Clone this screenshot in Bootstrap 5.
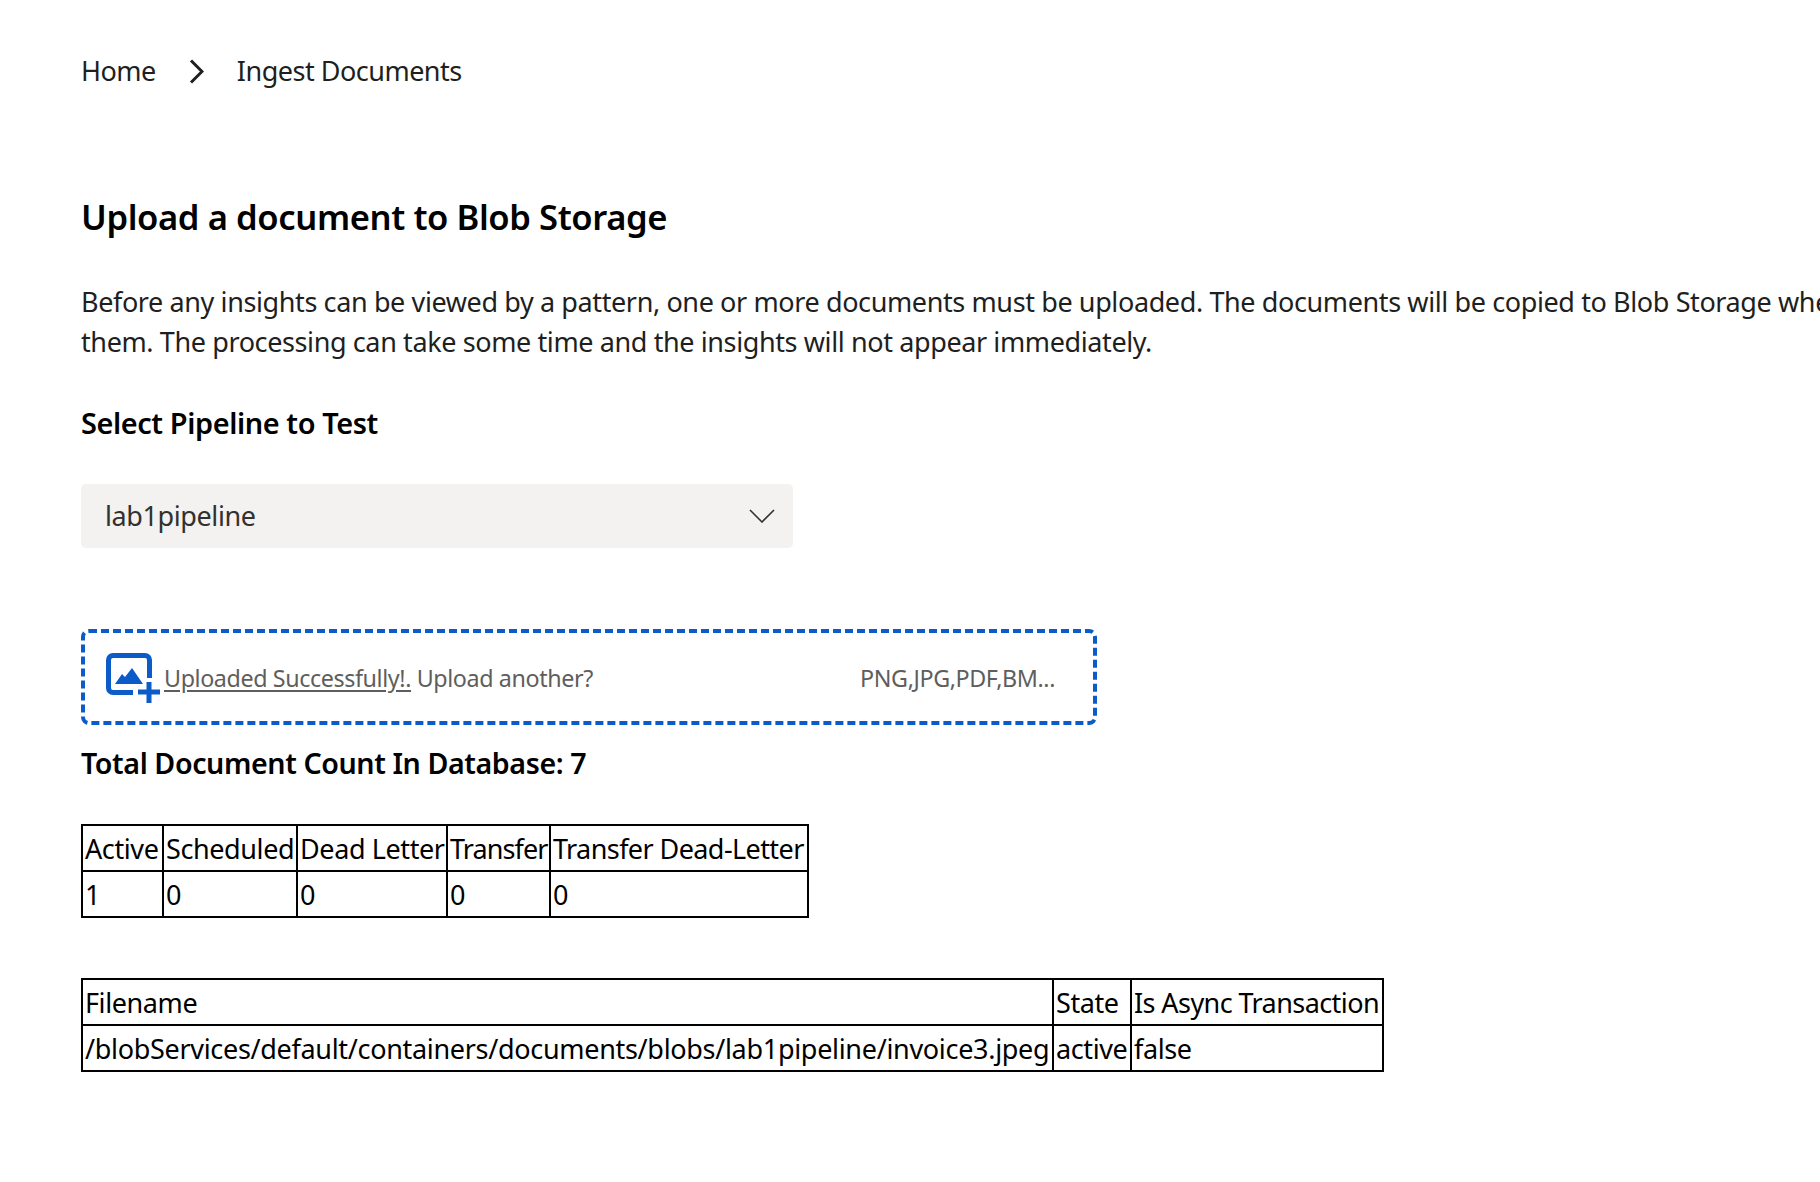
<!DOCTYPE html>
<html lang="en">
<head>
<meta charset="utf-8">
<title>Ingest Documents</title>
<meta name="viewport" content="width=device-width,initial-scale=1">
<link href="https://cdn.jsdelivr.net/npm/bootstrap@5.3.2/dist/css/bootstrap.min.css" rel="stylesheet">
<style>
  html, body   { overflow-x:hidden; }
  body         { font-family:"Noto Sans", "Open Sans", sans-serif; font-size:27px; color:#000; letter-spacing:-.4px; }
  .page-wrap   { padding:49px 0 0 81px; width:2000px; }
  .crumbs      { height:44px; gap:33px; line-height:44px; color:#201f1e; letter-spacing:-.5px; }
  .page-title  { font-size:34.6px; font-weight:600; line-height:46px; margin:101px 0 0; }
  .intro       { line-height:40px; margin:42px 0 0; color:#201f1e; white-space:nowrap; letter-spacing:-.39px; }
  .sub-title   { font-size:28.9px; font-weight:600; line-height:40px; margin:41px 0 0; }
  .pipeline    { width:712px; height:64px; margin-top:41px; padding:0 18px 0 24px; background:#f3f2f1; border-radius:5px; color:#323130; }
  .drop-zone   { width:1016px; height:96px; margin-top:81px; padding:2px 38px 0 21px; border:4px dashed #0b5cc9; border-radius:8px; color:#605e5c; font-size:23.3px; }
  .drop-zone u { text-underline-offset:3px; }
  .drop-types  { margin-left:auto; }
  .doc-count   { font-size:28.6px; font-weight:600; line-height:40px; margin:18px 0 0; }
  .grid-table  { table-layout:fixed; border-collapse:collapse; margin:0; }
  .grid-table td { border:2px solid #000; height:46px; padding:2px 2px 0; white-space:nowrap; overflow:hidden; line-height:42px; }
  .grid-table td.cell-tight { letter-spacing:-.9px; }
  .grid-table td.cell-snug  { letter-spacing:-.58px; }
  .grid-table td.cell-wide  { letter-spacing:-.31px; }
  .queue-table { width:726px; margin-top:41px; }
  .file-table  { width:1301px; margin-top:60px; }
  #q1 { width:81px; } #q2 { width:134px; } #q3 { width:150px; } #q4 { width:103px; } #q5 { width:258px; }
  #f1 { width:971px; } #f2 { width:78px; } #f3 { width:252px; }
</style>
</head>
<body>
<div class="page-wrap">

  <!-- breadcrumb -->
  <div class="crumbs d-flex align-items-center">
    <span>Home</span>
    <svg width="15" height="25" viewBox="0 0 15 25" fill="none" stroke="#201f1e" stroke-width="3"><path d="M2 1.500 13 12.500 2 23.500"/></svg>
    <span>Ingest Documents</span>
  </div>

  <h1 class="page-title">Upload a document to Blob Storage</h1>
  <p class="intro">Before any insights can be viewed by a pattern, one or more documents must be uploaded. The documents will be copied to Blob Storage when<br>them. The processing can take some time and the insights will not appear immediately.</p>

  <h2 class="sub-title">Select Pipeline to Test</h2>
  <div class="pipeline d-flex align-items-center justify-content-between">
    <span>lab1pipeline</span>
    <svg width="26" height="14" viewBox="0 0 26 14" fill="none" stroke="#323130" stroke-width="1.6"><path d="M1 1 13 13 25 1"/></svg>
  </div>

  <!-- upload box -->
  <div class="drop-zone d-flex align-items-center">
    <svg class="flex-shrink-0 me-1" width="54" height="52" viewBox="0 0 54 52">
      <path d="M43.5 26V8A4.5 4.5 0 0 0 39 3.500H7A4.500 4.500 0 0 0 2.500 8V36A4.500 4.500 0 0 0 7 40.500H27" fill="none" stroke="#0b5cc9" stroke-width="5"/>
      <path d="M9 32 16 22 19 25 26 16 37 32Z" fill="#0b5cc9"/>
      <path d="M43 30V51M32 40H54" fill="none" stroke="#0b5cc9" stroke-width="5"/>
    </svg>
    <span><u>Uploaded Successfully!.</u> Upload another?</span>
    <span class="drop-types">PNG,JPG,PDF,BM...</span>
  </div>

  <div class="doc-count">Total Document Count In Database: 7</div>

  <table class="grid-table queue-table">
    <colgroup><col id="q1"><col id="q2"><col id="q3"><col id="q4"><col id="q5"></colgroup>
    <tr><td>Active</td><td>Scheduled</td><td>Dead Letter</td><td class="cell-tight">Transfer</td><td class="cell-snug">Transfer Dead-Letter</td></tr>
    <tr><td>1</td><td>0</td><td>0</td><td>0</td><td>0</td></tr>
  </table>

  <table class="grid-table file-table">
    <colgroup><col id="f1"><col id="f2"><col id="f3"></colgroup>
    <tr><td>Filename</td><td>State</td><td class="cell-snug">Is Async Transaction</td></tr>
    <tr><td class="cell-wide">/blobServices/default/containers/documents/blobs/lab1pipeline/invoice3.jpeg</td><td>active</td><td>false</td></tr>
  </table>

</div>
<script src="https://cdn.jsdelivr.net/npm/bootstrap@5.3.2/dist/js/bootstrap.bundle.min.js"></script>
</body>
</html>
